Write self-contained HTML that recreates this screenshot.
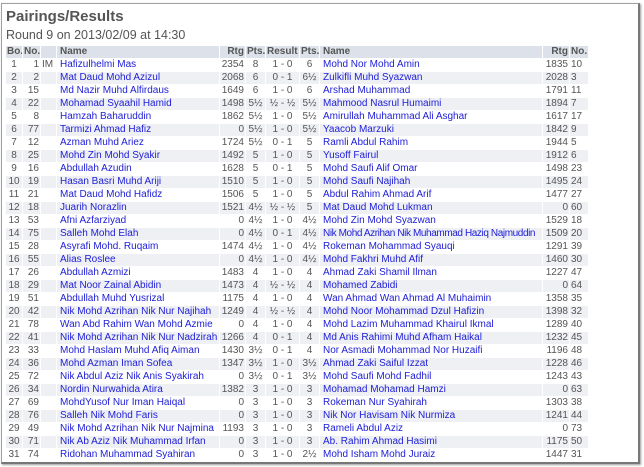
<!DOCTYPE html>
<html><head><meta charset="utf-8"><style>
body{margin:0;background:#fff;width:644px;height:467px;overflow:hidden;font-family:"Liberation Sans",sans-serif;}
.panel{position:absolute;left:1px;top:3px;width:636px;height:458px;border:1px solid #a0a0a0;border-right:2px solid #777;border-bottom:2px solid #777;background:#fff;box-shadow:1px 1px 2px #999;}
h1{position:absolute;left:4px;top:4px;margin:0;font-size:15px;font-weight:bold;color:#555;}
.sub{position:absolute;left:4px;top:24px;font-size:12.5px;color:#555;}
table{position:absolute;left:3px;top:41px;width:584px;border-collapse:separate;border-spacing:1px;table-layout:fixed;font-size:10px;color:#555;}
td,th{height:12px;padding:0 1px;white-space:nowrap;overflow:hidden;line-height:12px;box-sizing:border-box;}
th{background:#dde2ea;font-weight:bold;color:#555;text-align:left;}
tr:nth-child(odd) td{background:#eef0f4;}
.r{text-align:right}.c{text-align:center}
.n{color:#2020d8;padding-left:3px}
.t{letter-spacing:-0.4px}
</style></head><body><div class="panel">
<h1>Pairings/Results</h1>
<div class="sub">Round 9 on 2013/02/09 at 14:30</div>
<table>
<colgroup><col style="width:16px"><col style="width:17px"><col style="width:15px"><col style="width:162px"><col style="width:25px"><col style="width:19px"><col style="width:33px"><col style="width:19px"><col style="width:222px"><col style="width:26px"><col style="width:18px"></colgroup>
<tr><th>Bo.</th><th>No.</th><th></th><th style="padding-left:3px">Name</th><th class="r">Rtg</th><th>Pts.</th><th>Result</th><th>Pts.</th><th style="padding-left:3px">Name</th><th class="r">Rtg</th><th>No.</th></tr>
<tr><td class="c">1</td><td class="r">1</td><td>IM</td><td class="n">Hafizulhelmi Mas</td><td class="r">2354</td><td class="c">8</td><td class="c">1 - 0</td><td class="c">6</td><td class="n">Mohd Nor Mohd Amin</td><td class="r">1835</td><td>10</td></tr>
<tr><td class="c">2</td><td class="r">2</td><td></td><td class="n">Mat Daud Mohd Azizul</td><td class="r">2068</td><td class="c">6</td><td class="c">0 - 1</td><td class="c">6½</td><td class="n">Zulkifli Muhd Syazwan</td><td class="r">2028</td><td>3</td></tr>
<tr><td class="c">3</td><td class="r">15</td><td></td><td class="n">Md Nazir Muhd Alfirdaus</td><td class="r">1649</td><td class="c">6</td><td class="c">1 - 0</td><td class="c">6</td><td class="n">Arshad Muhammad</td><td class="r">1791</td><td>11</td></tr>
<tr><td class="c">4</td><td class="r">22</td><td></td><td class="n">Mohamad Syaahil Hamid</td><td class="r">1498</td><td class="c">5½</td><td class="c">½ - ½</td><td class="c">5½</td><td class="n">Mahmood Nasrul Humaimi</td><td class="r">1894</td><td>7</td></tr>
<tr><td class="c">5</td><td class="r">8</td><td></td><td class="n">Hamzah Baharuddin</td><td class="r">1862</td><td class="c">5½</td><td class="c">1 - 0</td><td class="c">5½</td><td class="n">Amirullah Muhammad Ali Asghar</td><td class="r">1617</td><td>17</td></tr>
<tr><td class="c">6</td><td class="r">77</td><td></td><td class="n">Tarmizi Ahmad Hafiz</td><td class="r">0</td><td class="c">5½</td><td class="c">1 - 0</td><td class="c">5½</td><td class="n">Yaacob Marzuki</td><td class="r">1842</td><td>9</td></tr>
<tr><td class="c">7</td><td class="r">12</td><td></td><td class="n">Azman Muhd Ariez</td><td class="r">1724</td><td class="c">5½</td><td class="c">0 - 1</td><td class="c">5</td><td class="n">Ramli Abdul Rahim</td><td class="r">1944</td><td>5</td></tr>
<tr><td class="c">8</td><td class="r">25</td><td></td><td class="n">Mohd Zin Mohd Syakir</td><td class="r">1492</td><td class="c">5</td><td class="c">1 - 0</td><td class="c">5</td><td class="n">Yusoff Fairul</td><td class="r">1912</td><td>6</td></tr>
<tr><td class="c">9</td><td class="r">16</td><td></td><td class="n">Abdullah Azudin</td><td class="r">1628</td><td class="c">5</td><td class="c">0 - 1</td><td class="c">5</td><td class="n">Mohd Saufi Alif Omar</td><td class="r">1498</td><td>23</td></tr>
<tr><td class="c">10</td><td class="r">19</td><td></td><td class="n">Hasan Basri Muhd Ariji</td><td class="r">1510</td><td class="c">5</td><td class="c">1 - 0</td><td class="c">5</td><td class="n">Mohd Saufi Najihah</td><td class="r">1495</td><td>24</td></tr>
<tr><td class="c">11</td><td class="r">21</td><td></td><td class="n">Mat Daud Mohd Hafidz</td><td class="r">1506</td><td class="c">5</td><td class="c">1 - 0</td><td class="c">5</td><td class="n">Abdul Rahim Ahmad Arif</td><td class="r">1477</td><td>27</td></tr>
<tr><td class="c">12</td><td class="r">18</td><td></td><td class="n">Juarih Norazlin</td><td class="r">1521</td><td class="c">4½</td><td class="c">½ - ½</td><td class="c">5</td><td class="n">Mat Daud Mohd Lukman</td><td class="r">0</td><td>60</td></tr>
<tr><td class="c">13</td><td class="r">53</td><td></td><td class="n">Afni Azfarziyad</td><td class="r">0</td><td class="c">4½</td><td class="c">1 - 0</td><td class="c">4½</td><td class="n">Mohd Zin Mohd Syazwan</td><td class="r">1529</td><td>18</td></tr>
<tr><td class="c">14</td><td class="r">75</td><td></td><td class="n">Salleh Mohd Elah</td><td class="r">0</td><td class="c">4½</td><td class="c">0 - 1</td><td class="c">4½</td><td class="n t">Nik Mohd Azrihan Nik Muhammad Haziq Najmuddin</td><td class="r">1509</td><td>20</td></tr>
<tr><td class="c">15</td><td class="r">28</td><td></td><td class="n">Asyrafi Mohd. Ruqaim</td><td class="r">1474</td><td class="c">4½</td><td class="c">1 - 0</td><td class="c">4½</td><td class="n">Rokeman Mohammad Syauqi</td><td class="r">1291</td><td>39</td></tr>
<tr><td class="c">16</td><td class="r">55</td><td></td><td class="n">Alias Roslee</td><td class="r">0</td><td class="c">4½</td><td class="c">1 - 0</td><td class="c">4½</td><td class="n">Mohd Fakhri Muhd Afif</td><td class="r">1460</td><td>30</td></tr>
<tr><td class="c">17</td><td class="r">26</td><td></td><td class="n">Abdullah Azmizi</td><td class="r">1483</td><td class="c">4</td><td class="c">1 - 0</td><td class="c">4</td><td class="n">Ahmad Zaki Shamil Ilman</td><td class="r">1227</td><td>47</td></tr>
<tr><td class="c">18</td><td class="r">29</td><td></td><td class="n">Mat Noor Zainal Abidin</td><td class="r">1473</td><td class="c">4</td><td class="c">½ - ½</td><td class="c">4</td><td class="n">Mohamed Zabidi</td><td class="r">0</td><td>64</td></tr>
<tr><td class="c">19</td><td class="r">51</td><td></td><td class="n">Abdullah Muhd Yusrizal</td><td class="r">1175</td><td class="c">4</td><td class="c">1 - 0</td><td class="c">4</td><td class="n">Wan Ahmad Wan Ahmad Al Muhaimin</td><td class="r">1358</td><td>35</td></tr>
<tr><td class="c">20</td><td class="r">42</td><td></td><td class="n">Nik Mohd Azrihan Nik Nur Najihah</td><td class="r">1249</td><td class="c">4</td><td class="c">½ - ½</td><td class="c">4</td><td class="n">Mohd Noor Mohammad Dzul Hafizin</td><td class="r">1398</td><td>32</td></tr>
<tr><td class="c">21</td><td class="r">78</td><td></td><td class="n">Wan Abd Rahim Wan Mohd Azmie</td><td class="r">0</td><td class="c">4</td><td class="c">1 - 0</td><td class="c">4</td><td class="n">Mohd Lazim Muhammad Khairul Ikmal</td><td class="r">1289</td><td>40</td></tr>
<tr><td class="c">22</td><td class="r">41</td><td></td><td class="n">Nik Mohd Azrihan Nik Nur Nadzirah</td><td class="r">1266</td><td class="c">4</td><td class="c">0 - 1</td><td class="c">4</td><td class="n">Md Anis Rahimi Muhd Afham Haikal</td><td class="r">1232</td><td>45</td></tr>
<tr><td class="c">23</td><td class="r">33</td><td></td><td class="n">Mohd Haslam Muhd Afiq Aiman</td><td class="r">1430</td><td class="c">3½</td><td class="c">0 - 1</td><td class="c">4</td><td class="n">Nor Asmadi Mohammad Nor Huzaifi</td><td class="r">1196</td><td>48</td></tr>
<tr><td class="c">24</td><td class="r">36</td><td></td><td class="n">Mohd Azman Iman Sofea</td><td class="r">1347</td><td class="c">3½</td><td class="c">1 - 0</td><td class="c">3½</td><td class="n">Ahmad Zaki Saiful Izzat</td><td class="r">1228</td><td>46</td></tr>
<tr><td class="c">25</td><td class="r">72</td><td></td><td class="n">Nik Abdul Aziz Nik Anis Syakirah</td><td class="r">0</td><td class="c">3½</td><td class="c">0 - 1</td><td class="c">3½</td><td class="n">Mohd Saufi Mohd Fadhil</td><td class="r">1243</td><td>43</td></tr>
<tr><td class="c">26</td><td class="r">34</td><td></td><td class="n">Nordin Nurwahida Atira</td><td class="r">1382</td><td class="c">3</td><td class="c">1 - 0</td><td class="c">3</td><td class="n">Mohamad Mohamad Hamzi</td><td class="r">0</td><td>63</td></tr>
<tr><td class="c">27</td><td class="r">69</td><td></td><td class="n">MohdYusof Nur Iman Haiqal</td><td class="r">0</td><td class="c">3</td><td class="c">1 - 0</td><td class="c">3</td><td class="n">Rokeman Nur Syahirah</td><td class="r">1303</td><td>38</td></tr>
<tr><td class="c">28</td><td class="r">76</td><td></td><td class="n">Salleh Nik Mohd Faris</td><td class="r">0</td><td class="c">3</td><td class="c">1 - 0</td><td class="c">3</td><td class="n">Nik Nor Havisam Nik Nurmiza</td><td class="r">1241</td><td>44</td></tr>
<tr><td class="c">29</td><td class="r">49</td><td></td><td class="n">Nik Mohd Azrihan Nik Nur Najmina</td><td class="r">1193</td><td class="c">3</td><td class="c">1 - 0</td><td class="c">3</td><td class="n">Rameli Abdul Aziz</td><td class="r">0</td><td>73</td></tr>
<tr><td class="c">30</td><td class="r">71</td><td></td><td class="n">Nik Ab Aziz Nik Muhammad Irfan</td><td class="r">0</td><td class="c">3</td><td class="c">1 - 0</td><td class="c">3</td><td class="n">Ab. Rahim Ahmad Hasimi</td><td class="r">1175</td><td>50</td></tr>
<tr><td class="c">31</td><td class="r">74</td><td></td><td class="n">Ridohan Muhammad Syahiran</td><td class="r">0</td><td class="c">3</td><td class="c">1 - 0</td><td class="c">2½</td><td class="n">Mohd Isham Mohd Juraiz</td><td class="r">1447</td><td>31</td></tr>
</table>
</div></body></html>
